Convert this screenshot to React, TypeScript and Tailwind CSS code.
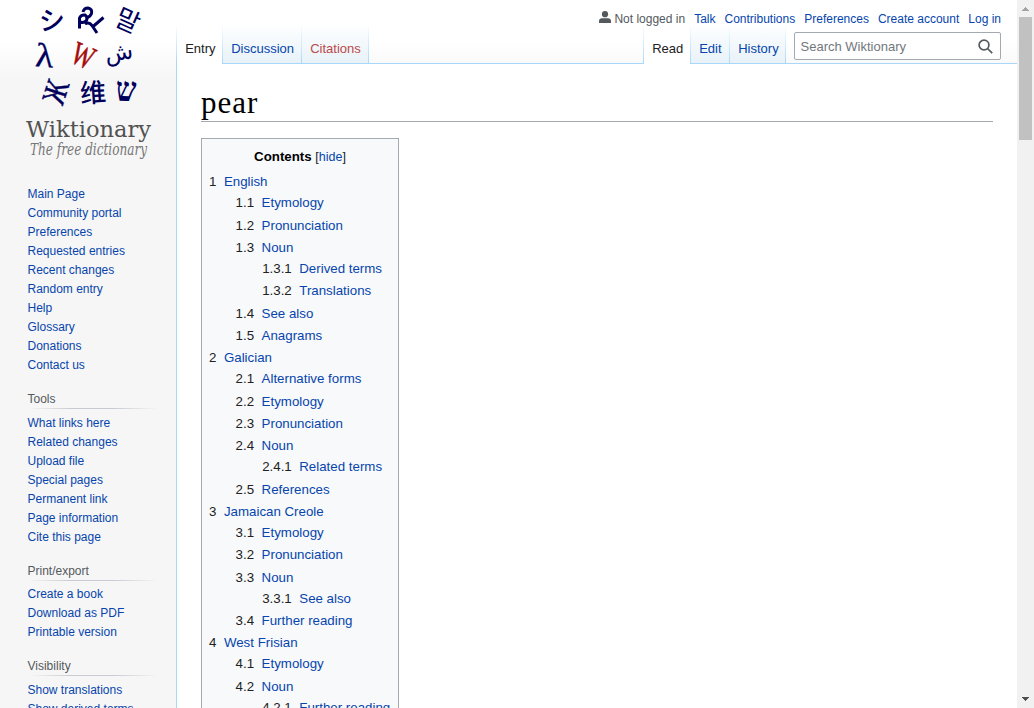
import React from "react";

type Entry = { n: string; t: string; kids?: Entry[] };

const toc: Entry[] = [
  {
    n: "1",
    t: "English",
    kids: [
      { n: "1.1", t: "Etymology" },
      { n: "1.2", t: "Pronunciation" },
      {
        n: "1.3",
        t: "Noun",
        kids: [
          { n: "1.3.1", t: "Derived terms" },
          { n: "1.3.2", t: "Translations" },
        ],
      },
      { n: "1.4", t: "See also" },
      { n: "1.5", t: "Anagrams" },
    ],
  },
  {
    n: "2",
    t: "Galician",
    kids: [
      { n: "2.1", t: "Alternative forms" },
      { n: "2.2", t: "Etymology" },
      { n: "2.3", t: "Pronunciation" },
      { n: "2.4", t: "Noun", kids: [{ n: "2.4.1", t: "Related terms" }] },
      { n: "2.5", t: "References" },
    ],
  },
  {
    n: "3",
    t: "Jamaican Creole",
    kids: [
      { n: "3.1", t: "Etymology" },
      { n: "3.2", t: "Pronunciation" },
      { n: "3.3", t: "Noun", kids: [{ n: "3.3.1", t: "See also" }] },
      { n: "3.4", t: "Further reading" },
    ],
  },
  {
    n: "4",
    t: "West Frisian",
    kids: [
      { n: "4.1", t: "Etymology" },
      { n: "4.2", t: "Noun", kids: [{ n: "4.2.1", t: "Further reading" }] },
    ],
  },
];

const mainLinks = [
  "Main Page",
  "Community portal",
  "Preferences",
  "Requested entries",
  "Recent changes",
  "Random entry",
  "Help",
  "Glossary",
  "Donations",
  "Contact us",
];

const portals = [
  {
    title: "Tools",
    links: [
      "What links here",
      "Related changes",
      "Upload file",
      "Special pages",
      "Permanent link",
      "Page information",
      "Cite this page",
    ],
  },
  { title: "Print/export", links: ["Create a book", "Download as PDF", "Printable version"] },
  { title: "Visibility", links: ["Show translations", "Show derived terms"] },
];

function TocList({ items, nested }: { items: Entry[]; nested?: boolean }) {
  return (
    <ul className={nested ? "pl-[26.6px]" : ""}>
      {items.map((e) => (
        <li key={e.n} className="mb-[1.33px]">
          <div className="flex h-[21px] whitespace-nowrap leading-[21px]">
            <span className="pr-[7.5px] text-[#202122]">{e.n}</span>
            <a className="text-[#0645ad]">{e.t}</a>
          </div>
          {e.kids && <TocList items={e.kids} nested />}
        </li>
      ))}
    </ul>
  );
}

function Logo() {
  return (
    <svg width="160" height="164" viewBox="0 0 160 164" className="block overflow-visible">
      <g fill="#00005c" textAnchor="middle">
        <text x="52" y="30" fontSize="26" fontWeight="500" fontFamily="'Noto Sans CJK JP', sans-serif" transform="rotate(-3 51 20)">シ</text>
        <g fill="none" stroke="#00005c" strokeWidth="3">
          <path d="M79.500 28.500V18Q81 14.500 85 15Q88 17 86.500 20.500Q84 23.500 80 22" />
          <path d="M83 12Q84 8 88 8Q92.500 9 91.500 13.500Q90 17 86.500 18" />
          <path d="M85 24Q89 21.500 92 25.500L97 33M92.500 27L103.500 17.500" />
        </g>
        <text x="128" y="30" fontSize="26" fontFamily="'Noto Sans CJK KR', sans-serif" transform="rotate(24 128 20)">말</text>
        <text x="44.500" y="67" fontSize="34" fontFamily="'Liberation Serif', serif" stroke="#00005c" strokeWidth=".3" transform="rotate(4 44 56) translate(-4.450 0) scale(1.1 1)">λ</text>
        <text x="83" y="66.500" fontSize="33" fill="#a60b0b" fontFamily="'Liberation Serif', serif" stroke="#a60b0b" strokeWidth=".6" transform="rotate(24 83 56) translate(24.900 0) scale(.7 1)">W</text>
        <text x="119" y="60" fontSize="23" fontFamily="'DejaVu Sans', sans-serif" transform="rotate(-8 119 54)">ش</text>
        <text x="56" y="102.500" fontSize="33" fontFamily="'Liberation Serif', serif" stroke="#00005c" strokeWidth=".5" transform="rotate(-72 56 92) translate(12.300 0) scale(.78 1)">Ж</text>
        <text x="93" y="102" fontSize="26" fontWeight="500" fontFamily="'Noto Sans CJK SC', sans-serif" transform="rotate(-4 93 92)">维</text>
        <text x="126" y="101" fontSize="34" fontWeight="700" fontFamily="'Liberation Serif', serif" transform="rotate(2 126 90) translate(18.900 0) scale(.85 1)">ש</text>
      </g>
      <text x="26" y="137" fontSize="22" fill="#525252" fontFamily="'DejaVu Serif Condensed','DejaVu Serif',serif" textLength="125" lengthAdjust="spacingAndGlyphs">Wiktionary</text>
      <text x="30" y="155" fontSize="16" fill="#777777" fontStyle="italic" fontFamily="'DejaVu Serif Condensed','DejaVu Serif',serif" textLength="117" lengthAdjust="spacingAndGlyphs">The free dictionary</text>
    </svg>
  );
}

function FadeLine() {
  return <span className="h-[40px] w-px shrink-0 bg-linear-to-b from-white to-[#a7d7f9]" />;
}

function Tab({ label, width, selected, red }: { label: string; width: string; selected?: boolean; red?: boolean }) {
  return (
    <div
      className={
        "flex h-[40px] shrink-0 " +
        width +
        (selected ? " bg-white" : " border-b border-[#a7d7f9] bg-linear-to-b from-white to-[#e8f2f8]")
      }
    >
      <span
        className={
          "pl-[8.2px] pt-[16px] text-[13px] leading-[18px] " +
          (selected ? "text-[#202122]" : red ? "text-[#ba4a4a]" : "text-[#0645ad]")
        }
      >
        {label}
      </span>
    </div>
  );
}

export default function App() {
  return (
    <div className="flex h-[708px] w-[1034px] overflow-hidden bg-[#f6f6f6] font-['Liberation_Sans',Arial,sans-serif]">
      <div className="flex w-[1017px] shrink-0 bg-[linear-gradient(to_bottom,#ffffff_0,#ffffff_40px,#f6f6f6_80px,#f6f6f6_100%)]">
        <aside className="h-[708px] w-[176px] shrink-0 overflow-hidden">
          <div className="h-[185px]">
            <Logo />
          </div>
          <nav className="pl-[27.5px] text-[12px] leading-[19px]">
            {mainLinks.map((l) => (
              <a key={l} className="block text-[#0645ad]">{l}</a>
            ))}
            {portals.map((p) => (
              <section key={p.title}>
                <h3 className="mt-[15.2px] h-[18px] leading-[18px] text-[#54595d]">{p.title}</h3>
                <div className="mb-[4.4px] h-px w-[130px] bg-[linear-gradient(to_right,rgba(200,204,209,0)_0,#c8ccd1_33%,#c8ccd1_66%,rgba(200,204,209,0)_100%)]" />
                {p.links.map((l) => (
                  <a key={l} className="block text-[#0645ad]">{l}</a>
                ))}
              </section>
            ))}
          </nav>
        </aside>

        <div className="flex min-w-0 flex-1 flex-col">
          <header className="h-[64px] shrink-0">
            <div className="relative z-10 flex h-[24px] justify-end pr-[16px] pt-[10px] text-[12px] leading-[18px] text-[#0645ad]">
              <svg width="12" height="13" viewBox="0 0 12 13" className="mr-[3.500px] mt-px shrink-0 fill-[#54595d]">
                <circle cx="6" cy="3.2" r="3.1" />
                <path d="M0 12V10.400Q0 7.300 3 7.300H9Q12 7.300 12 10.400V12Z" />
              </svg>
              <div className="flex gap-[9px] whitespace-nowrap">
                <span className="text-[#54595d]">Not logged in</span>
                <a>Talk</a>
                <a>Contributions</a>
                <a>Preferences</a>
                <a>Create account</a>
                <a>Log in</a>
              </div>
            </div>
            <div className="flex h-[40px]">
              <FadeLine />
              <Tab label="Entry" width="w-[45px]" selected />
              <FadeLine />
              <Tab label="Discussion" width="w-[78px]" />
              <FadeLine />
              <Tab label="Citations" width="w-[66px]" red />
              <FadeLine />
              <div className="flex-1 border-b border-[#a7d7f9]" />
              <FadeLine />
              <Tab label="Read" width="w-[46px]" selected />
              <FadeLine />
              <Tab label="Edit" width="w-[38px]" />
              <FadeLine />
              <Tab label="History" width="w-[55px]" />
              <FadeLine />
              <div className="h-[40px] w-[231px] shrink-0 border-b border-[#a7d7f9] pl-[8px] pt-[8px]">
                <div className="flex h-[28px] w-[207px] items-center justify-between rounded-[2px] border border-[#a2a9b1] bg-white pl-[5.5px] pr-[7px]">
                  <span className="pt-[2px] text-[13px] leading-[18px] text-[#72777d]">Search Wiktionary</span>
                  <svg width="15" height="15" viewBox="0 0 15 15" fill="none" stroke="#54595d" strokeWidth="1.7">
                    <circle cx="6" cy="6" r="4.9" />
                    <path d="M9.5 9.5L14.2 14.2" />
                  </svg>
                </div>
              </div>
            </div>
          </header>

          <main className="min-h-0 flex-1 overflow-hidden border-l border-[#a7d7f9] bg-white pl-[24px] pr-[24px]">
            <h1 className="mb-[16px] h-[58px] border-b border-[#a2a9b1] pt-[21px] font-['Liberation_Serif',serif] text-[31px] leading-[36px] tracking-[1px] text-black">
              pear
            </h1>
            <div className="w-[198px] border border-[#a2a9b1] bg-[#f8f9fa] pb-2 pl-[7px] text-[13.3px]">
              <div className="-ml-[7px] h-[32.3px] pt-[7px] text-center leading-[21px]">
                <b className="text-black">Contents</b>{" "}
                <span className="text-[12.5px] text-[#202122]">
                  [<a className="text-[#0645ad]">hide</a>]
                </span>
              </div>
              <TocList items={toc} />
            </div>
          </main>
        </div>
      </div>

      <div className="flex w-[17px] shrink-0 flex-col items-center bg-[#f1f1f1]">
        <svg width="17" height="17" viewBox="0 0 17 17" className="shrink-0" shapeRendering="crispEdges">
          <path d="M5 11L8.5 7L12 11Z" fill="#a3a3a3" />
        </svg>
        <div className="h-[123px] w-[13px] bg-[#c1c1c1]" />
        <div className="flex-1" />
        <svg width="17" height="17" viewBox="0 0 17 17" className="shrink-0" shapeRendering="crispEdges">
          <path d="M5 6L8.5 10L12 6Z" fill="#505050" />
        </svg>
      </div>
    </div>
  );
}
